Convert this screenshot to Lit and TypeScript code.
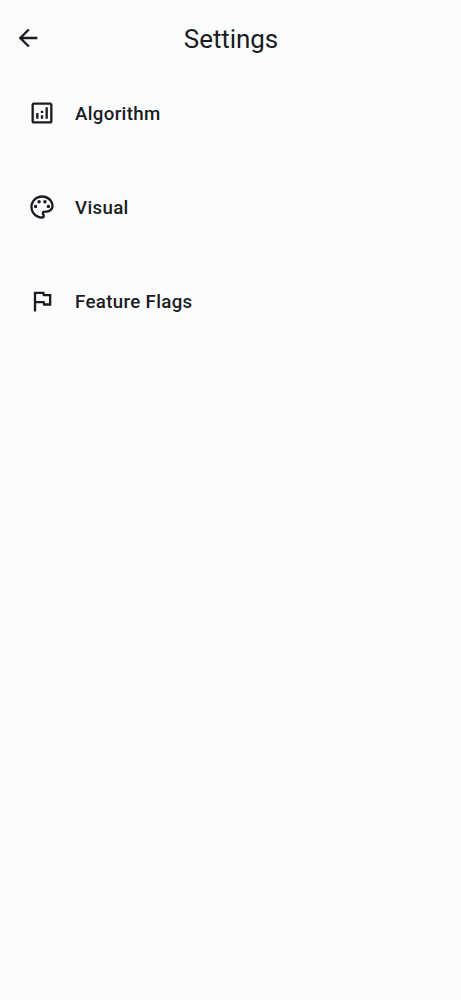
import { LitElement, html, css } from "lit";
import { customElement } from "lit/decorators.js";

const icons = {
  back: "M20 11H7.83l5.59-5.59L12 4l-8 8 8 8 1.41-1.41L7.83 13H20v-2z",
  chart: "M19 3H5c-1.1 0-2 .9-2 2v14c0 1.1.9 2 2 2h14c1.1 0 2-.9 2-2V5c0-1.1-.9-2-2-2zm0 16H5V5h14v14zM7 12h2v5H7zM15 7h2v10h-2zM11 14h2v3h-2zM11 10h2v2h-2z",
  palette: "M12 22C6.49 22 2 17.51 2 12S6.49 2 12 2s10 4.04 10 9c0 3.31-2.69 6-6 6h-1.77c-.28 0-.5.22-.5.5 0 .12.05.23.13.33.41.47.64 1.06.64 1.67A2.5 2.5 0 0 1 12 22zm0-18c-4.41 0-8 3.59-8 8s3.59 8 8 8c.28 0 .5-.22.5-.5a.54.54 0 0 0-.14-.35c-.41-.46-.63-1.05-.63-1.65a2.5 2.5 0 0 1 2.5-2.5H16c2.21 0 4-1.79 4-4 0-3.86-3.59-7-8-7zM6.5 10a1.5 1.5 0 1 0 0 3a1.5 1.5 0 1 0 0-3zM9.5 6a1.5 1.5 0 1 0 0 3a1.5 1.5 0 1 0 0-3zM14.5 6a1.5 1.5 0 1 0 0 3a1.5 1.5 0 1 0 0-3zM17.5 10a1.5 1.5 0 1 0 0 3a1.5 1.5 0 1 0 0-3z",
  flag: "M12.36 6l.4 2H18v6h-3.36l-.4-2H7V6h5.36M14 4H5v17h2v-7h5.6l.4 2h7V6h-5.6L14 4z",
};

const icon = (d: string) => html`<svg viewBox="0 0 24 24" aria-hidden="true"><path d=${d}></path></svg>`;

const items = [
  { label: "Algorithm", path: icons.chart },
  { label: "Visual", path: icons.palette },
  { label: "Feature Flags", path: icons.flag },
];

@customElement("app-root")
export class AppRoot extends LitElement {
  static styles = css`
    :host {
      display: block;
      min-height: 100vh;
      background: #fcfcff;
      color: #1a1c1e;
      font-family: Roboto, sans-serif;
    }
    header {
      display: grid;
      grid-template-columns: 56px 1fr 56px;
      align-items: center;
      height: 75px;
    }
    button {
      border: 0;
      padding: 0;
      background: none;
      color: inherit;
      font: inherit;
    }
    .back {
      display: flex;
      justify-content: center;
    }
    svg {
      display: block;
      width: 28px;
      height: 28px;
      fill: currentColor;
      flex: none;
    }
    h1 {
      margin: 0;
      padding: 3px 0 0 1px;
      font-size: 26px;
      line-height: 33px;
      font-weight: 400;
      letter-spacing: -0.08px;
      text-align: center;
    }
    nav {
      display: flex;
      flex-direction: column;
    }
    .item {
      display: flex;
      align-items: center;
      gap: 19px;
      height: 94px;
      padding: 0 28px 18px;
      text-align: left;
    }
    .label {
      padding-top: 2px;
      font-size: 18.7px;
      line-height: 28px;
      font-weight: 500;
      letter-spacing: 0.33px;
    }
  `;

  render() {
    return html`
      <header>
        <button class="back" aria-label="Back">${icon(icons.back)}</button>
        <h1>Settings</h1>
      </header>
      <nav>
        ${items.map((i) => html`<button class="item">${icon(i.path)}<span class="label">${i.label}</span></button>`)}
      </nav>
    `;
  }
}
